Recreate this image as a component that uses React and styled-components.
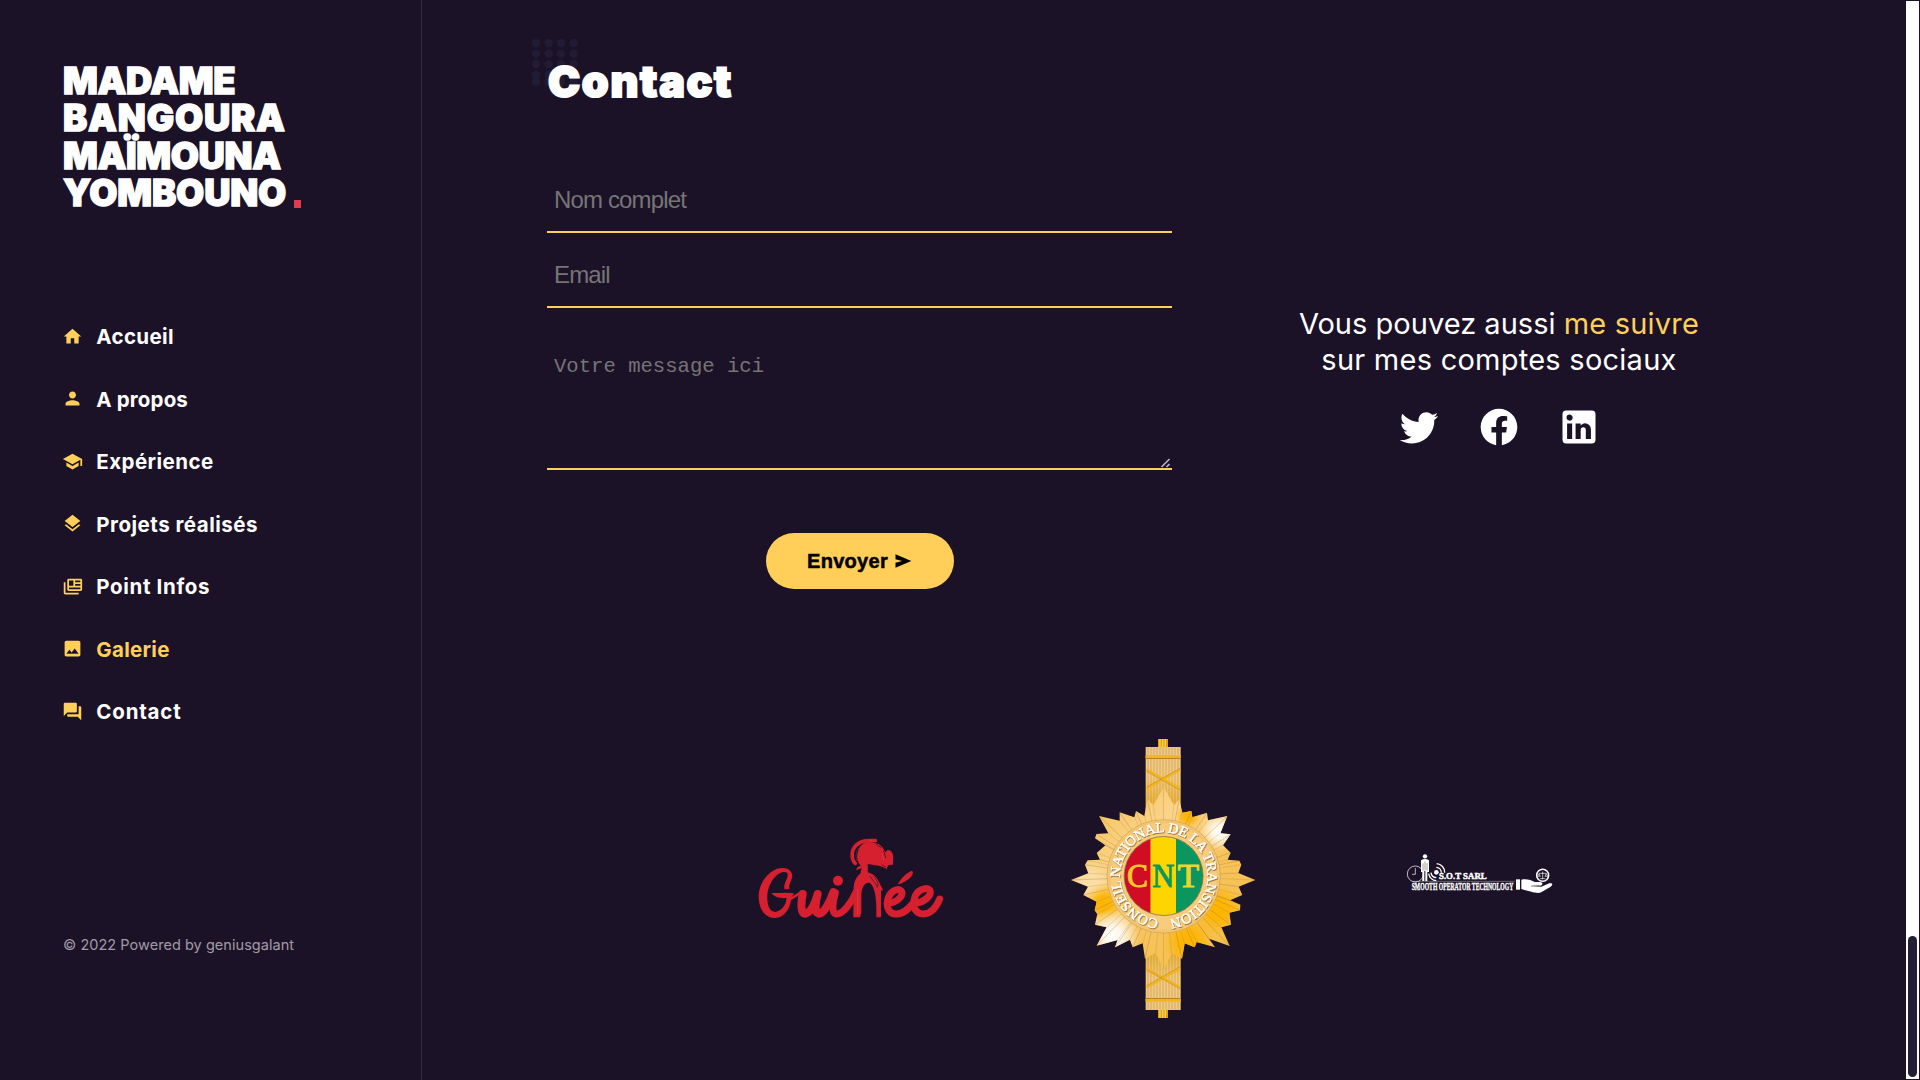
import React from "react";
import styled, { createGlobalStyle } from "styled-components";
import { MdHome, MdPerson, MdSchool, MdLayers, MdInsertPhoto, MdQuestionAnswer } from "react-icons/md";

const night = "#1c1228";
const gold = "#ffcf5a";

const GlobalStyle = createGlobalStyle`
  *, *::before, *::after { box-sizing: border-box; }
  body { margin: 0; background: ${night}; color: #fff; font-family: Inter, "Open Sans", sans-serif; overflow: hidden; }
`;

const Page = styled.div`
  display: flex;
  width: 1920px;
  height: 1080px;
  overflow: hidden;
  background: ${night};
`;

const Sidebar = styled.aside`
  display: flex;
  flex-direction: column;
  flex: 0 0 422px;
  padding: 62.6px 0 0 63px;
  border-right: 1px solid #352c40;
`;

const Brand = styled.h1`
  margin: 0;
  font-size: 36.4px;
  font-weight: 900;
  line-height: 37.5px;
  -webkit-text-stroke: 1.3px #fff;
`;

const BrandLine = styled.span`
  display: flex;
  align-items: baseline;
  letter-spacing: ${(p) => p.$track}px;
`;

const BrandDot = styled.i`
  align-self: flex-end;
  width: 7px;
  height: 8px;
  margin: 0 0 5px 8px;
  background: #e13c4e;
`;

const Nav = styled.nav`
  display: flex;
  flex-direction: column;
  margin-top: 93.3px;
`;

const NavLink = styled.a`
  display: flex;
  align-items: center;
  gap: 13px;
  height: 62.5px;
  margin-left: -0.7px;
  color: ${(p) => (p.$active ? gold : "#fff")};
  font-size: 20.5px;
  font-weight: 700;
  line-height: 26px;
  letter-spacing: ${(p) => p.$track}px;

  svg { width: 21px; height: 21px; margin-top: -1.5px; color: ${gold}; flex: none; }
`;

const Credits = styled.p`
  margin: 191.3px 0 0;
  color: #a09ca4;
  font-size: 14.5px;
  line-height: 20px;
  letter-spacing: 0.04px;
`;

const Main = styled.main`
  flex: 1;
  padding: 56px 80px 0 125px;
`;

const Heading = styled.h2`
  position: relative;
  isolation: isolate;
  margin: 0 0 62px;
  padding-left: 1px;
  font-size: 43px;
  font-weight: 900;
  line-height: 50px;
  letter-spacing: 1.7px;
  -webkit-text-stroke: 2px #fff;
`;

const HeadingDots = styled.svg`
  position: absolute;
  z-index: -1;
  left: -15px;
  top: -17px;
  width: 48px;
  height: 48px;
  fill: #211c33;
`;

const ContactGrid = styled.div`
  display: grid;
  grid-template-columns: 625px 654px;
`;

const Form = styled.form`
  display: flex;
  flex-direction: column;
  align-items: center;
`;

const Field = styled.input`
  width: 100%;
  height: 65px;
  margin: 0 0 10px;
  padding: 0 7px;
  border: 0;
  border-bottom: 2px solid ${gold};
  outline: 0;
  background: transparent;
  color: #fff;
  font: 24px "Liberation Sans", Arial, sans-serif;
  letter-spacing: -0.85px;
  &::placeholder { color: #757575; opacity: 1; }
`;

const MessageBox = styled.div`
  position: relative;
  width: 100%;
  height: 130px;
  margin: 22px 0 63px;
`;

const Message = styled.textarea`
  display: block;
  width: 100%;
  height: 100%;
  padding: 12px 7px;
  border: 0;
  border-bottom: 2px solid ${gold};
  outline: 0;
  background: transparent;
  color: #fff;
  font: 20.6px/30px "Liberation Mono", monospace;
  resize: none;
  &::placeholder { color: #757575; opacity: 1; }
`;

const Grip = styled.svg`
  position: absolute;
  right: 1px;
  bottom: 2px;
  width: 11px;
  height: 11px;
  stroke: #bab6be;
  stroke-width: 1.6;
`;

const SendButton = styled.button`
  display: flex;
  align-items: center;
  width: 188px;
  height: 56px;
  gap: 5px;
  padding: 0 0 0 41.5px;
  border: 0;
  border-radius: 28px;
  background: ${gold};
  color: #000;
  font: bold 20px "Liberation Sans", Arial, sans-serif;
  letter-spacing: 0.3px;
  -webkit-text-stroke: 0.5px #000;
  svg { width: 20px; height: 20px; fill: #000; }
`;

const Social = styled.section`
  display: flex;
  flex-direction: column;
  align-items: center;
  padding-top: 138px;
`;

const SocialText = styled.p`
  margin: 0;
  font-size: 29px;
  line-height: 36.3px;
  white-space: pre;
  letter-spacing: ${(p) => p.$track}px;
  em { color: ${gold}; font-style: normal; letter-spacing: 0.2px; }
`;

const SocialIcons = styled.div`
  display: flex;
  gap: 36px;
  margin-top: 26px;
  svg { width: 44px; height: 44px; fill: #fff; }
`;

const Partners = styled.section`
  display: flex;
  align-items: flex-start;
  margin: 141px 0 0 193px;
`;

const GuineeSvg = styled.svg`
  width: 220px;
  height: 110px;
  margin: 90px 100px 0 0;
  flex: none;
`;

const CntSvg = styled.svg`
  width: 210px;
  height: 300px;
  margin-right: 120px;
  flex: none;
`;

const RingText = styled.text`
  font: 43px "Liberation Serif", serif;
  fill: #fff;
  stroke: #fff;
  stroke-width: 1.4px;
  filter: drop-shadow(2px 3px 1px rgba(110, 80, 30, 0.7));
`;

const SotSvg = styled.svg`
  width: 180px;
  height: 70px;
  margin-top: 110px;
  flex: none;
`;

const ScrollTrack = styled.div`
  display: flex;
  flex: 0 0 13px;
  align-items: flex-end;
  justify-content: center;
  margin: 1px 1px 1px 0;
  padding-bottom: 2px;
  background: #fff;
`;

const ScrollThumb = styled.div`
  width: 9px;
  height: 141px;
  border-radius: 5px;
  background: #231f36;
`;

function Glyph({ d }) {
  return (
    <svg viewBox="0 0 24 24" fill="currentColor"><path d={d} /></svg>
  );
}

const newsPath = "M4 7V19H19V21H4C2 21 2 19 2 19V7H4M21.3 3H7.7C6.76 3 6 3.7 6 4.55V15.45C6 16.31 6.76 17 7.7 17H21.3C22.24 17 23 16.31 23 15.45V4.55C23 3.7 22.24 3 21.3 3M8 5H13V11H8V5M21 15H8V13H21V15M21 11H15V9H21V11M21 7H15V5H21V7Z";
const sendPath = "M3 20V14L11 12L3 10V4L22 12Z";
const twitterPath = "M22.46,6C21.69,6.35 20.86,6.58 20,6.69C20.88,6.16 21.56,5.32 21.88,4.31C21.05,4.81 20.13,5.16 19.16,5.36C18.37,4.5 17.26,4 16,4C13.65,4 11.73,5.92 11.73,8.29C11.73,8.63 11.77,8.96 11.84,9.27C8.28,9.09 5.11,7.38 3,4.79C2.63,5.42 2.42,6.16 2.42,6.94C2.42,8.43 3.17,9.75 4.33,10.5C3.62,10.5 2.96,10.3 2.38,10C2.38,10 2.38,10 2.38,10.03C2.38,12.11 3.86,13.85 5.82,14.24C5.46,14.34 5.08,14.39 4.69,14.39C4.42,14.39 4.15,14.36 3.89,14.31C4.43,16 6,17.26 7.89,17.29C6.43,18.45 4.58,19.13 2.56,19.13C2.22,19.13 1.88,19.11 1.54,19.07C3.44,20.29 5.7,21 8.12,21C16,21 20.33,14.46 20.33,8.79C20.33,8.6 20.33,8.42 20.32,8.23C21.16,7.63 21.88,6.87 22.46,6Z";
const facebookPath = "M12 2.04C6.5 2.04 2 6.53 2 12.06C2 17.06 5.66 21.21 10.44 21.96V14.96H7.9V12.06H10.44V9.85C10.44 7.34 11.93 5.96 14.22 5.96C15.31 5.96 16.45 6.15 16.45 6.15V8.62H15.19C13.95 8.62 13.56 9.39 13.56 10.22V12.06H16.34L15.89 14.96H13.56V21.96C18.34 21.21 22 17.06 22 12.06C22 6.53 17.5 2.04 12 2.04Z";
const linkedinPath = "M19 3A2 2 0 0 1 21 5V19A2 2 0 0 1 19 21H5A2 2 0 0 1 3 19V5A2 2 0 0 1 5 3H19M18.5 18.5V13.2A3.26 3.26 0 0 0 15.24 9.94C14.39 9.94 13.4 10.46 12.92 11.24V10.13H10.13V18.5H12.92V13.57C12.92 12.8 13.54 12.17 14.31 12.17A1.4 1.4 0 0 1 15.71 13.57V18.5H18.5M6.88 8.56A1.68 1.68 0 0 0 8.56 6.88C8.56 5.95 7.81 5.19 6.88 5.19A1.69 1.69 0 0 0 5.19 6.88C5.19 7.81 5.95 8.56 6.88 8.56M8.27 18.5V10.13H5.5V18.5H8.27Z";

const links = [
  { label: "Accueil", icon: <MdHome />, track: 0.35 },
  { label: "A propos", icon: <MdPerson />, track: 0.15 },
  { label: "Expérience", icon: <MdSchool />, track: 0.45 },
  { label: "Projets réalisés", icon: <MdLayers />, track: 0.5 },
  { label: "Point Infos", icon: <Glyph d={newsPath} />, track: 0.65 },
  { label: "Galerie", icon: <MdInsertPhoto />, track: 0.3 },
  { label: "Contact", icon: <MdQuestionAnswer />, track: 0.8 },
];
const activeLabel = "Galerie";

function GuineeLogo() {
  return (
    <GuineeSvg viewBox="0 0 660 330" fill="none" stroke="#d6202f" strokeLinecap="round" strokeLinejoin="round">
      <path fill="#d6202f" stroke="none" d="M134 208C128 190 150 170 141 158C118 146 84 186 82 226C80 262 94 282 113 274C131 266 140 248 139 234C122 236 104 232 94 219C116 220 142 216 162 220C160 228 154 228 153 238C152 262 134 294 104 294C72 294 55 262 56 226C58 182 94 142 130 144C154 145 162 164 153 182C146 196 147 201 149 206Z" />
      <path strokeWidth="8" d="M150 237C162 233 170 223 182 218" />
      <path strokeWidth="24" d="M188 222C183 248 181 278 194 281C212 280 227 248 233 222C225 250 223 278 236 281C253 280 270 246 280 216" />
      <path strokeWidth="21" d="M286 218C278 246 274 279 288 282C308 284 333 250 349 215" />
      <circle cx="294" cy="182" r="15" fill="#d6202f" stroke="none" />
      <path fill="#d6202f" stroke="none" d="M340 292L341 202C343 178 354 166 362 160L364 145L348 151L352 142L362 137C350 125 350 108 354 94C362 68 384 61 403 69L416 72L427 81L436 97L443 90C456 90 462 104 459 118L459 134L444 135L440 147C430 142 420 137 406 136L383 132L382 157C397 159 411 172 417 186L429 210L423 212V292H409C410 248 408 204 390 189C375 185 365 201 364 226V277L360 292Z" />
      <path strokeWidth="11" d="M346 130C333 118 333 91 348 76C365 60 385 61 406 62" />
      <path stroke={night} strokeWidth="2" d="M350 124C343 109 348 87 362 77M410 74L424 83M431 92L437 113M401 171C410 177 415 190 414 198M390 169C402 184 409 192 412 201M426 135L437 141" />
      <path stroke="#e9ccd0" strokeWidth="1" strokeDasharray="2 5" opacity=".7" d="M350 120C346 101 350 89 362 77M353 281V205M392 61L404 66M427 103L431 118M383 140V156M401 174L411 193" />
      <path strokeWidth="21" d="M445 249C470 250 493 225 484 213C474 202 449 214 443 239C437 266 450 283 470 282C495 281 510 261 520 248" />
      <path strokeWidth="21" d="M524 249C550 250 578 225 569 210C560 199 529 210 523 236C516 264 530 283 550 282C577 281 591 257 599 237" />
      <path fill="#d6202f" strokeWidth="3" d="M476 191C483 178 497 160 516 154C520 158 514 170 507 175C497 182 486 190 476 191Z" />
    </GuineeSvg>
  );
}

const starPoints = [
  [311, 172], [342, 226], [358, 208], [367, 248], [394, 243], [397, 262], [441, 248], [444, 271], [502, 258], [481, 310], [512, 313],
  [489, 346], [512, 368], [503, 389], [538, 392], [544, 404], [535, 429], [586, 450], [536, 470], [547, 495], [510, 511], [541, 524], [540, 541],
  [508, 548], [513, 584], [484, 592], [509, 648], [447, 626], [465, 652], [410, 636], [404, 652], [374, 640], [366, 686], [335, 669], [311, 722],
  [287, 669], [255, 686], [248, 640], [218, 652], [210, 629], [165, 652], [173, 630], [110, 647], [140, 592], [105, 584], [112, 552], [104, 541],
  [110, 515], [70, 495], [84, 470], [33, 450], [85, 430], [75, 404], [83, 391], [120, 389], [110, 369], [136, 346], [105, 325], [109, 312],
  [145, 310], [117, 258], [179, 272], [179, 247], [223, 262], [228, 243], [253, 258], [262, 208], [280, 226],
];

function Fasces({ flip }) {
  return (
    <g transform={flip ? "matrix(1 0 0 -1 0 891)" : undefined}>
      <rect x="294" y="27" width="30" height="28" fill="#e0a011" />
      <path d="M300 27V54M308 27V54M316 27V54" stroke="#ffd34c" strokeWidth="4" />
      <rect x="257" y="51" width="105" height="190" fill="url(#bundle)" />
      <path d="M264 52V240M273 52V240M282 52V240M291 52V240M300 52V240M309 52V240M318 52V240M327 52V240M336 52V240M345 52V240M354 52V240" stroke="#99713a" strokeWidth="1.6" opacity=".7" />
      <path d="M257 83H362" stroke="#b98220" strokeWidth="8" />
      <path d="M257 80H362M259 119L360 176M360 119L259 176" stroke="#f3b51d" strokeWidth="8" />
      <path d="M260 124L360 181M360 115L260 171" stroke="#a87925" strokeWidth="1.3" />
    </g>
  );
}

function CntLogo() {
  const outline = starPoints.map((p) => p.join(",")).join(" ");
  return (
    <CntSvg viewBox="0 0 630 900">
      <defs>
        <linearGradient id="bundle" x2="0" y2="1">
          <stop stopColor="#f0c987" /><stop offset=".5" stopColor="#f6cc7c" /><stop offset="1" stopColor="#eeb02a" />
        </linearGradient>
        <linearGradient id="star" x1="0" x2="1" y1="0" y2="1">
          <stop stopColor="#f5bc43" /><stop offset=".35" stopColor="#fbd48c" /><stop offset=".6" stopColor="#f8c35c" /><stop offset="1" stopColor="#f3bc42" />
        </linearGradient>
        <radialGradient id="shine"><stop stopColor="#fff" /><stop offset=".35" stopColor="#fff" stopOpacity=".85" /><stop offset="1" stopColor="#fff" stopOpacity="0" /></radialGradient>
        <radialGradient id="amber"><stop stopColor="#fdb400" /><stop offset=".4" stopColor="#fdb400" stopOpacity=".9" /><stop offset="1" stopColor="#fdb400" stopOpacity="0" /></radialGradient>
        <clipPath id="starClip"><polygon points={outline} /></clipPath>
        <clipPath id="flagClip"><circle cx="311" cy="438" r="118" /></clipPath>
        <path id="ringText" d="M311 569A131 131 0 1 1 311.1 569" />
      </defs>
      <Fasces />
      <Fasces flip />
      <polygon points={outline} fill="url(#star)" />
      <g clipPath="url(#starClip)">
        <circle cx="385" cy="635" r="75" fill="url(#amber)" />
        <circle cx="475" cy="540" r="75" fill="url(#amber)" />
        <circle cx="130" cy="520" r="60" fill="url(#amber)" />
        <circle cx="385" cy="258" r="38" fill="url(#amber)" />
        <ellipse cx="480" cy="305" rx="62" ry="58" fill="url(#shine)" />
        <circle cx="158" cy="618" r="80" fill="url(#shine)" />
        <circle cx="85" cy="450" r="65" fill="url(#shine)" opacity=".3" />
        {starPoints.map(([x, y], i) => (
          <path key={i} d={`M311 440L${x} ${y}`} stroke="#8c7130" strokeWidth={i % 2 ? 1 : 1.6} opacity=".55" />
        ))}
      </g>
      <circle cx="311" cy="439" r="170" fill="#f8cc7c" stroke="#b88f42" strokeWidth="1.5" />
      <circle cx="311" cy="439" r="163" fill="none" stroke="#efbd62" strokeWidth="7" opacity=".5" />
      <RingText><textPath href="#ringText" startOffset="15" textLength="790">CONSEIL NATIONAL DE LA TRANSITION</textPath></RingText>
      <g clipPath="url(#flagClip)">
        <path d="M190 310H272V570H190Z" fill="#d00d22" />
        <path d="M272 310H348V570H272Z" fill="#fdd500" />
        <path d="M348 310H440V570H348Z" fill="#0b965f" />
      </g>
      <circle cx="311" cy="438" r="118.5" fill="none" stroke="#67603a" strokeWidth="2" />
      <g fontFamily="Liberation Serif, serif" fontSize="100" strokeWidth="3">
        <text x="201" y="471" textLength="63" lengthAdjust="spacingAndGlyphs" fill="#fac72f" stroke="#fac72f">C</text>
        <text x="277" y="471" textLength="66" lengthAdjust="spacingAndGlyphs" fill="#0b965f" stroke="#0b965f">N</text>
        <text x="353" y="471" textLength="64" lengthAdjust="spacingAndGlyphs" fill="#ead72a" stroke="#ead72a">T</text>
      </g>
    </CntSvg>
  );
}

function SotLogo() {
  return (
    <SotSvg viewBox="0 0 540 210" fill="none" stroke="#fff">
      <circle cx="76" cy="102" r="24" strokeWidth="2.5" opacity=".85" />
      <path d="M76 84V103H66" strokeWidth="2" />
      <circle cx="105" cy="49" r="6.5" fill="#fff" stroke="none" />
      <path d="M93 61Q105 53 117 61V96H112V123H106V93H103V123H97V96H93Z" fill="#fff" stroke="none" />
      <path d="M105 65V91M99 70V92M111 70V92" stroke={night} strokeWidth="1.2" />
      <circle cx="139" cy="97" r="7" fill="#fff" stroke="none" />
      <path d="M139 82A16 16 0 0 1 154 98M140 71A26 26 0 0 1 164 98M123 98A17 17 0 0 0 139 113M116 101A25 25 0 0 0 139 122" strokeWidth="4" />
      <path d="M66 124H374" strokeWidth="1.4" opacity=".7" />
      <g fill="#fff" stroke="#fff" fontFamily="Liberation Serif, serif" fontWeight="700">
        <text x="147" y="117" fontSize="22" strokeWidth="1.2" textLength="143" lengthAdjust="spacingAndGlyphs">S.O.T SARL</text>
        <text x="65" y="151" fontSize="29" strokeWidth="1" textLength="305" lengthAdjust="spacingAndGlyphs">SMOOTH OPERATOR TECHNOLOGY</text>
      </g>
      <path d="M378 118H390V149H378Z" fill="#fff" stroke="none" />
      <path d="M394 119C408 115 424 120 434 126H451C460 127 459 136 450 137L425 138L454 140L478 130C488 128 490 134 482 140L455 156C444 162 430 158 394 147Z" fill="#fff" stroke="none" />
      <path d="M423 138L449 137" stroke={night} strokeWidth="1.5" />
      <circle cx="458" cy="106" r="18" strokeWidth="4.5" />
      <path d="M458 95V117M447 100H469M450 116H466M447 101L443 109H451L447 101M469 101L465 109H473L469 101" strokeWidth="2" />
    </SotSvg>
  );
}

export default function App() {
  return (
    <Page>
      <GlobalStyle />
      <Sidebar>
        <Brand>
          <BrandLine $track={-0.35}>MADAME</BrandLine>
          <BrandLine $track={0.8}>BANGOURA</BrandLine>
          <BrandLine $track={-0.35}>MAÏMOUNA</BrandLine>
          <BrandLine $track={-0.15}>YOMBOUNO<BrandDot /></BrandLine>
        </Brand>
        <Nav>
          {links.map((link) => (
            <NavLink key={link.label} $track={link.track} $active={link.label === activeLabel}>
              {link.icon}
              {link.label}
            </NavLink>
          ))}
        </Nav>
        <Credits>© 2022 Powered by geniusgalant</Credits>
      </Sidebar>
      <Main>
        <Heading>
          <HeadingDots viewBox="532 39 48 48">
            {[43, 53.7, 64, 74.7, 82].map((y) =>
              [536, 548.7, 561, 573.7].map((x) => <circle key={`${x}-${y}`} cx={x} cy={y} r="4.2" />)
            )}
          </HeadingDots>
          Contact
        </Heading>
        <ContactGrid>
          <Form>
            <Field placeholder="Nom complet" />
            <Field placeholder="Email" />
            <MessageBox>
              <Message placeholder="Votre message ici" />
              <Grip viewBox="0 0 11 11"><path d="M1.5 10L9.5 2M6.5 10L9.5 7" /></Grip>
            </MessageBox>
            <SendButton type="button">Envoyer <Glyph d={sendPath} /></SendButton>
          </Form>
          <Social>
            <SocialText $track={0.02}>Vous pouvez aussi <em>me suivre</em></SocialText>
            <SocialText $track={0.25}>sur mes comptes sociaux</SocialText>
            <SocialIcons>
              <Glyph d={twitterPath} />
              <Glyph d={facebookPath} />
              <Glyph d={linkedinPath} />
            </SocialIcons>
          </Social>
        </ContactGrid>
        <Partners>
          <GuineeLogo />
          <CntLogo />
          <SotLogo />
        </Partners>
      </Main>
      <ScrollTrack><ScrollThumb /></ScrollTrack>
    </Page>
  );
}
